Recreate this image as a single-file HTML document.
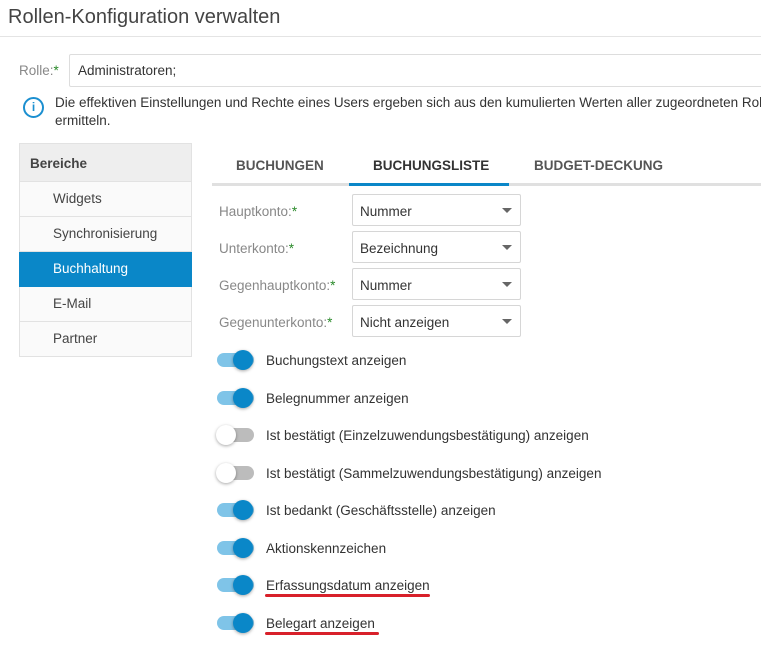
<!DOCTYPE html>
<html><head><style>
*{box-sizing:border-box;margin:0;padding:0}
body{width:761px;height:648px;overflow:hidden;background:#fff;font-family:"Liberation Sans",sans-serif;color:#333;font-size:13px;position:relative}
.a{position:absolute;white-space:nowrap}
.lbl{color:#888}
.req{color:#2a8a2a}
.sel{position:absolute;left:352px;width:169px;height:32px;border:1px solid #d6d6d6;border-radius:2px;padding:9px 7px;font-size:13.5px;color:#333}
.sel:after{content:"";position:absolute;right:8px;top:13px;border:5px solid transparent;border-top:5px solid #666}
.nav{position:absolute;left:19px;width:173px;height:35px;border:1px solid #e2e2e2;border-top:none;background:#fafafa;padding:9px 0 0 33px;font-size:13.5px;color:#444}
.tg{position:absolute;left:217px;width:37px;height:14px;border-radius:7px;background:#7fc4e8}
.tg i{position:absolute;left:16px;top:-3px;width:20px;height:20px;border-radius:50%;background:#0a87c8;box-shadow:0 1px 3px rgba(0,0,0,.35)}
.tg.off{background:#bcbcbc}
.tg.off i{left:-1px;background:#fff}
.tt{position:absolute;left:266px;font-size:13.5px;color:#333}
</style></head><body>
<div class="a" style="left:8px;top:6px;font-size:20px;color:#444">Rollen-Konfiguration verwalten</div>
<div class="a" style="left:0;top:36px;width:761px;height:1px;background:#e4e4e4"></div>
<div class="a lbl" style="left:19px;top:63px;font-size:13.5px">Rolle:<span class="req">*</span></div>
<div class="a" style="left:69px;top:54px;width:700px;height:33px;border:1px solid #ddd;border-radius:2px;padding:8px 8px;font-size:13.5px">Administratoren;</div>
<div class="a" style="left:23px;top:97px;width:21px;height:21px;border:2px solid #1b8fd0;border-radius:50%;color:#1b8fd0;font-weight:bold;font-size:12px;text-align:center;line-height:17px">i</div>
<div class="a" style="left:55px;top:94px;font-size:13.5px;line-height:18px">Die effektiven Einstellungen und Rechte eines Users ergeben sich aus den kumulierten Werten aller zugeordneten Rollen<br>ermitteln.</div>

<div class="a" style="left:19px;top:143px;width:173px;height:39px;border:1px solid #e2e2e2;background:#eee;padding:12px 10px;font-weight:bold;font-size:13.5px;color:#444">Bereiche</div>
<div class="nav" style="top:182px">Widgets</div>
<div class="nav" style="top:217px">Synchronisierung</div>
<div class="nav" style="top:252px;background:#0a87c8;color:#fff;border-color:#0a87c8">Buchhaltung</div>
<div class="nav" style="top:287px">E-Mail</div>
<div class="nav" style="top:322px">Partner</div>

<div class="a" style="left:236px;top:158px;font-weight:bold;font-size:13.5px;color:#555">BUCHUNGEN</div>
<div class="a" style="left:373px;top:158px;font-weight:bold;font-size:13.5px;color:#333">BUCHUNGSLISTE</div>
<div class="a" style="left:534px;top:158px;font-weight:bold;font-size:13.5px;color:#555">BUDGET-DECKUNG</div>
<div class="a" style="left:212px;top:183px;width:549px;height:3px;background:#e0e0e0"></div>
<div class="a" style="left:349px;top:183px;width:160px;height:3px;background:#0a87c8"></div>

<div class="a lbl" style="left:219px;top:204px;font-size:13.5px">Hauptkonto:<span class="req">*</span></div>
<div class="a lbl" style="left:219px;top:241px;font-size:13.5px">Unterkonto:<span class="req">*</span></div>
<div class="a lbl" style="left:219px;top:278px;font-size:13.5px">Gegenhauptkonto:<span class="req">*</span></div>
<div class="a lbl" style="left:219px;top:315px;font-size:13.5px">Gegenunterkonto:<span class="req">*</span></div>
<div class="sel" style="top:194px">Nummer</div>
<div class="sel" style="top:231px">Bezeichnung</div>
<div class="sel" style="top:268px">Nummer</div>
<div class="sel" style="top:305px">Nicht anzeigen</div>

<div class="tg" style="top:353px"><i></i></div><div class="tt" style="top:353px">Buchungstext anzeigen</div>
<div class="tg" style="top:391px"><i></i></div><div class="tt" style="top:391px">Belegnummer anzeigen</div>
<div class="tg off" style="top:428px"><i></i></div><div class="tt" style="top:428px">Ist bestätigt (Einzelzuwendungsbestätigung) anzeigen</div>
<div class="tg off" style="top:466px"><i></i></div><div class="tt" style="top:466px">Ist bestätigt (Sammelzuwendungsbestätigung) anzeigen</div>
<div class="tg" style="top:503px"><i></i></div><div class="tt" style="top:503px">Ist bedankt (Geschäftsstelle) anzeigen</div>
<div class="tg" style="top:541px"><i></i></div><div class="tt" style="top:541px">Aktionskennzeichen</div>
<div class="tg" style="top:578px"><i></i></div><div class="tt" style="top:578px">Erfassungsdatum anzeigen</div>
<div class="tg" style="top:616px"><i></i></div><div class="tt" style="top:616px">Belegart anzeigen</div>
<div class="a" style="left:265px;top:594px;width:165px;height:3px;border-radius:2px;background:#d8202a"></div>
<div class="a" style="left:265px;top:632px;width:114px;height:3px;border-radius:2px;background:#d8202a"></div>
</body></html>
